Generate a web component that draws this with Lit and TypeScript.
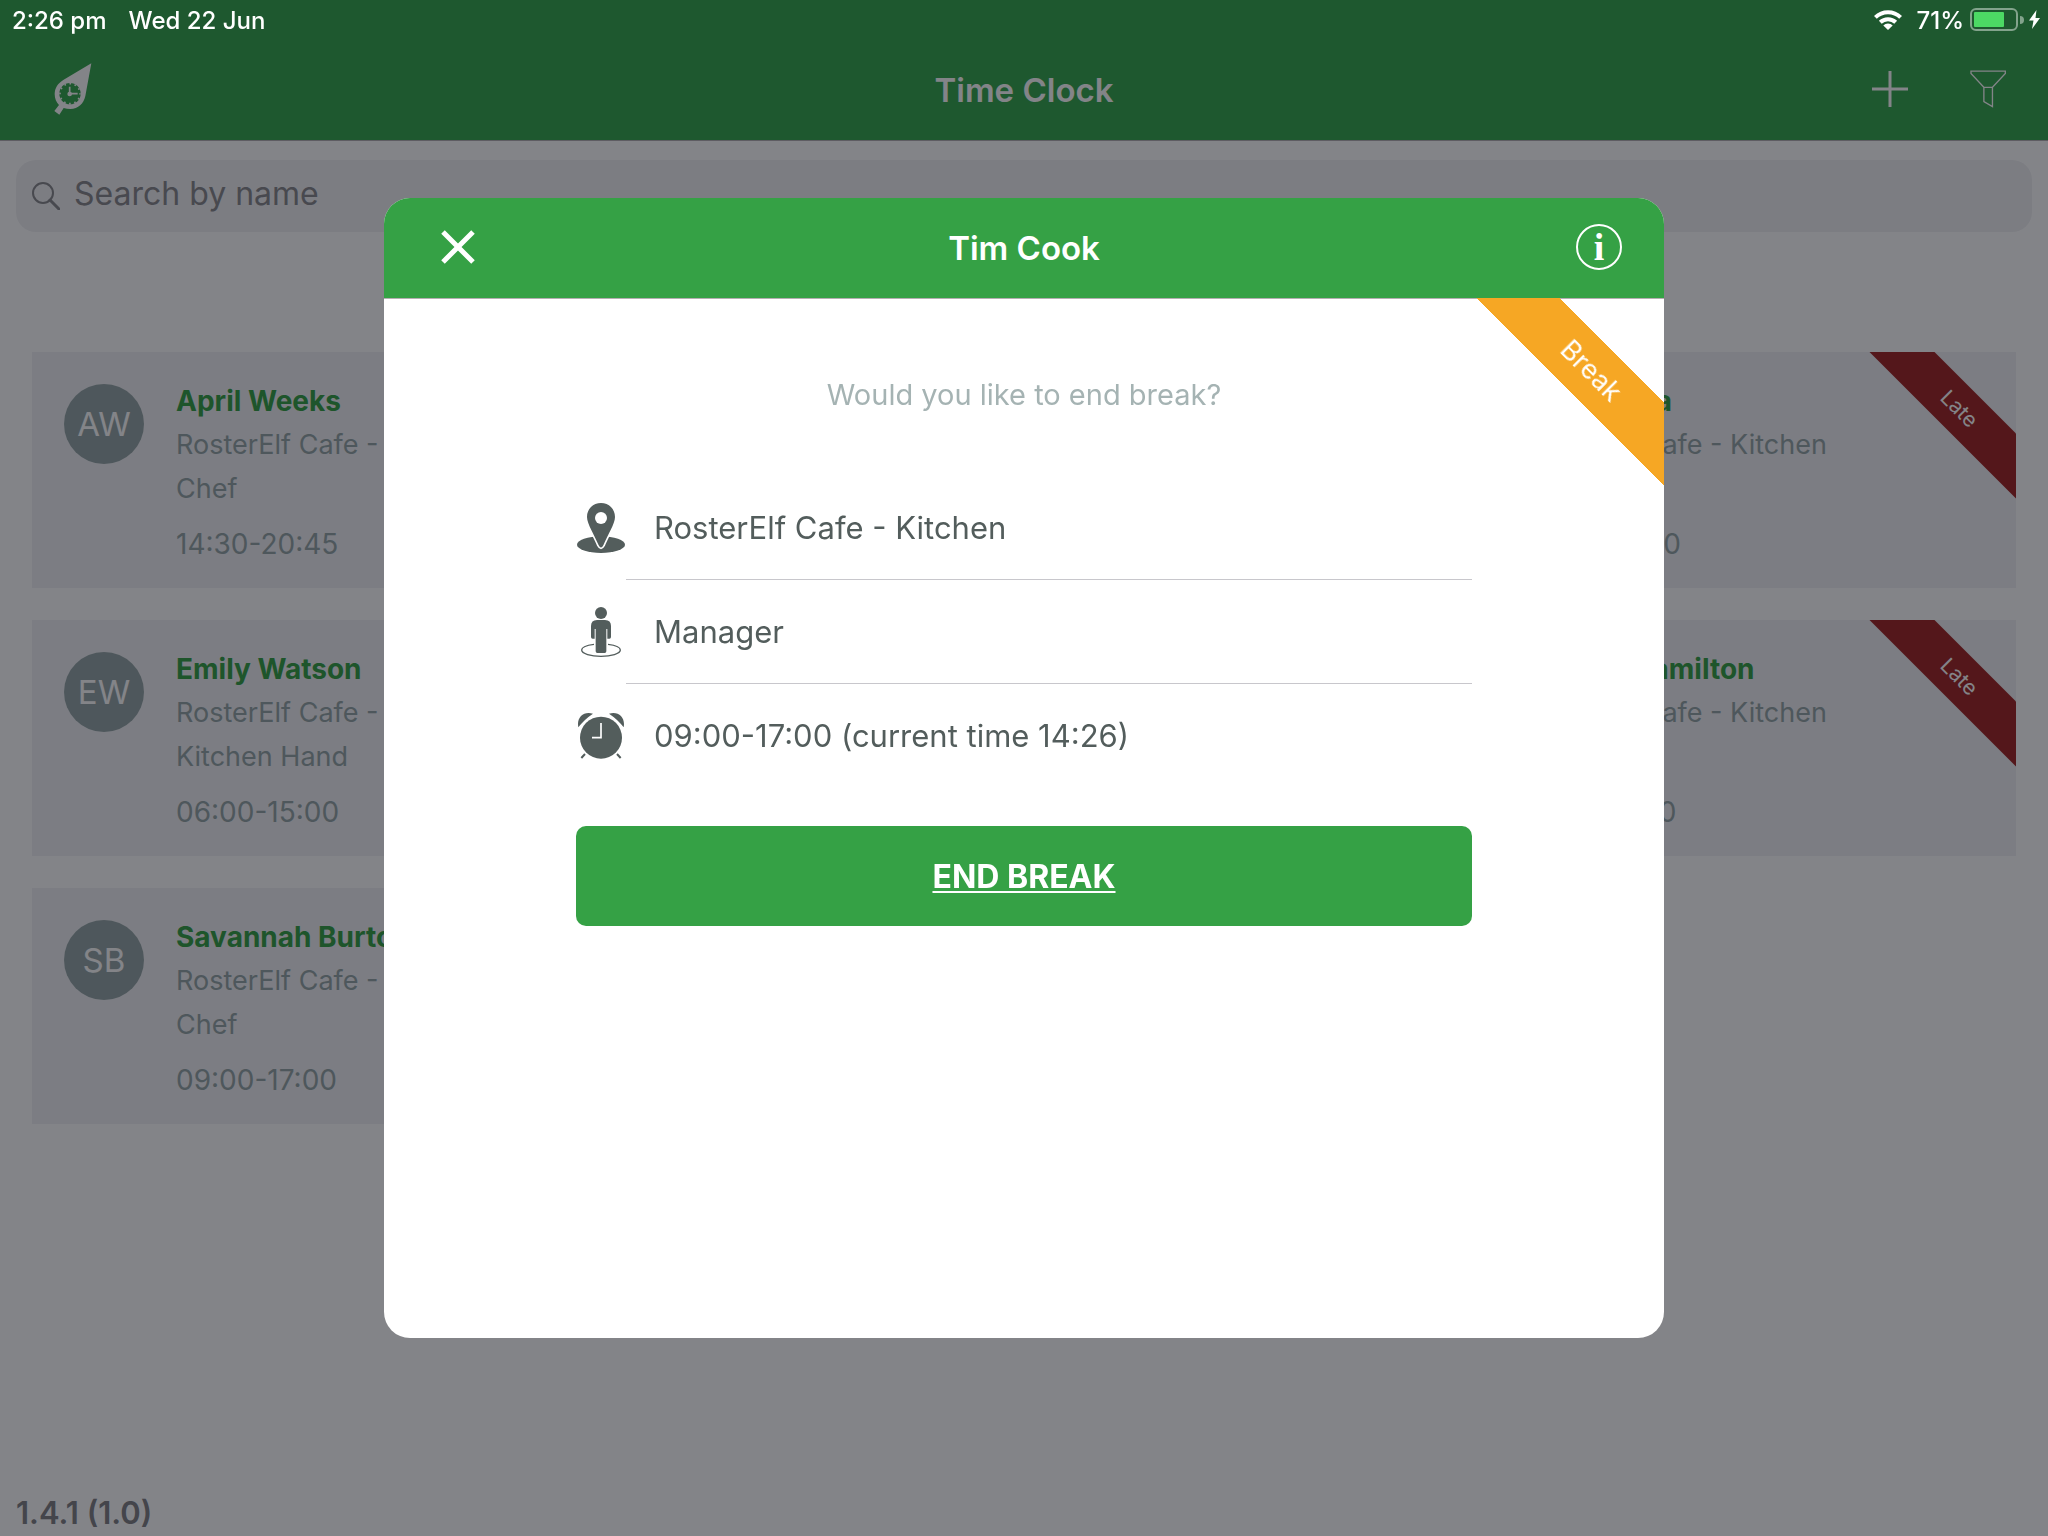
import { LitElement, html, css, svg, nothing } from "lit";
import { customElement, property, state } from "lit/decorators.js";

interface Shift {
  name: string;
  initials: string;
  site: string;
  role: string;
  time: string;
  flag?: "Late";
}

const SITE = "RosterElf Cafe - Kitchen";

const COLUMNS: Shift[][] = [
  [
    { name: "April Weeks", initials: "AW", site: SITE, role: "Chef", time: "14:30-20:45" },
    { name: "Emily Watson", initials: "EW", site: SITE, role: "Kitchen Hand", time: "06:00-15:00" },
    { name: "Savannah Burton", initials: "SB", site: SITE, role: "Chef", time: "09:00-17:00" },
  ],
  [],
  [
    { name: "Julia Costa", initials: "JC", site: SITE, role: "Chef", time: "09:00-17:00", flag: "Late" },
    { name: "Jessica Hamilton", initials: "JH", site: SITE, role: "Chef", time: "14:30-21:00", flag: "Late" },
  ],
];

const logoIcon = svg`
  <svg width="40" height="54" viewBox="160 188 120 162" aria-hidden="true">
    <path fill="currentColor" d="M275 192 L192 241 C174 252 165 266 165 284 C165 298 170 309 178 317 L164 335 L179 346 L192 326 C198 328 205 329 212 329 C236 328 252 314 257 290 Z"/>
    <circle cx="211" cy="283" r="32" fill="#35a64d"/>
    <circle cx="211" cy="283" r="30" fill="none" stroke="currentColor" stroke-width="5" stroke-dasharray="5 10.708" stroke-dashoffset="2.500"/>
    <path d="M210 262v21h24" fill="none" stroke="currentColor" stroke-width="5"/>
    <circle cx="210" cy="284" r="7" fill="currentColor"/>
  </svg>`;

const plusIcon = svg`
  <svg width="36" height="36" viewBox="0 0 36 36" aria-hidden="true">
    <path d="M18 0v36M0 18h36" stroke="currentColor" stroke-width="3"/>
  </svg>`;

const filterIcon = svg`
  <svg width="36" height="38" viewBox="666 210 109 114" aria-hidden="true">
    <path d="M669 213H773V220L734 262V320L708 305V262L669 220ZM708 262H734" fill="none" stroke="currentColor" stroke-width="4"/>
  </svg>`;

const wifiIcon = svg`
  <svg width="28" height="20" viewBox="0 0 28 20" aria-hidden="true">
    <g fill="none" stroke="#fff" stroke-width="4">
      <path d="M1.400 7.400A18 18 0 0 1 26.600 7.400"/>
      <path d="M6.300 12.300A11 11 0 0 1 21.700 12.300"/>
    </g>
    <path d="M14 20L9.300 15.400A6.700 6.700 0 0 1 18.700 15.400Z" fill="#fff"/>
  </svg>`;

const batteryIcon = svg`
  <svg width="70" height="24" viewBox="0 0 70 24" aria-hidden="true">
    <rect x="1" y="1" width="46" height="21" rx="5" fill="none" stroke="#fff" stroke-opacity=".45" stroke-width="2"/>
    <rect x="4" y="4" width="30" height="15" rx="1" fill="#4cd964"/>
    <path d="M50 8a4 4 0 0 1 0 8z" fill="#fff" fill-opacity=".45"/>
    <path d="M66.500 2L59 12.500H63.500L62 21L70 10H65.500Z" fill="#fff"/>
  </svg>`;

const searchIcon = svg`
  <svg width="28" height="28" viewBox="0 0 28 28" aria-hidden="true">
    <g fill="none" stroke="currentColor">
      <circle cx="11" cy="11" r="10" stroke-width="2"/>
      <path d="M18 18L27 27" stroke-width="3" stroke-linecap="round"/>
    </g>
  </svg>`;

const closeIcon = svg`
  <svg width="36" height="34" viewBox="0 0 36 34" aria-hidden="true">
    <path d="M3 2L33 32M33 2L3 32" stroke="currentColor" stroke-width="5"/>
  </svg>`;

const infoIcon = svg`
  <svg width="46" height="46" viewBox="0 0 46 46" aria-hidden="true">
    <circle cx="23" cy="23" r="22" fill="none" stroke="currentColor" stroke-width="2"/>
    <text class="info-glyph" x="23" y="36" text-anchor="middle" fill="currentColor">i</text>
  </svg>`;

const pinIcon = svg`
  <svg width="48" height="50" viewBox="0 0 144 150" aria-hidden="true">
    <ellipse cx="72" cy="125" rx="72" ry="25" fill="currentColor"/>
    <path d="M72 0C48 0 30 18 30 42C30 62 52 96 65 127Q72 140 79 127C92 96 114 62 114 42C114 18 96 0 72 0Z" fill="currentColor" stroke="#fff" stroke-width="10" paint-order="stroke"/>
    <circle cx="72" cy="45" r="18" fill="#fff"/>
  </svg>`;

const personIcon = svg`
  <svg width="48" height="50" viewBox="0 0 144 150" aria-hidden="true">
    <circle cx="72" cy="18" r="18" fill="currentColor"/>
    <path d="M51 112C27 115 14 121 14 129C14 140 42 148 72 148S130 140 130 129C130 121 117 115 93 112" fill="none" stroke="currentColor" stroke-width="4"/>
    <path d="M60 39H84Q102 39 102 57V90Q102 95 97 95H91V66H88V133Q88 138 83 138H61Q56 138 56 133V66H53V95H47Q42 95 42 90V57Q42 39 60 39Z" fill="currentColor"/>
  </svg>`;

const clockIcon = svg`
  <svg width="48" height="48" viewBox="0 0 144 144" aria-hidden="true">
    <circle cx="72" cy="77" r="63" fill="currentColor"/>
    <path d="M4 46C-2 16 20-4 48 5Q22 22 4 46ZM140 46C146 16 124-4 96 5Q122 22 140 46Z" fill="currentColor"/>
    <path d="M24 126L13 138M120 126L131 138" stroke="currentColor" stroke-width="6"/>
    <path d="M72 33V77H45" fill="none" stroke="#fff" stroke-width="5"/>
  </svg>`;

@customElement("shift-card")
export class ShiftCard extends LitElement {
  @property({ attribute: false }) shift!: Shift;

  static styles = css`
    .card {
      position: relative;
      display: flex;
      gap: 32px;
      overflow: hidden;
      padding: 27px 32px 22px;
      background: #f0f1f4;
    }
    .avatar {
      display: flex;
      flex: none;
      align-items: center;
      justify-content: center;
      width: 80px;
      height: 80px;
      margin-top: 5px;
      border-radius: 50%;
      background: #95a5a6;
      color: #fff;
      font-size: 33px;
    }
    .name,
    .line,
    .time {
      margin: 0;
      font-size: 28px;
      font-weight: 400;
      line-height: 44px;
      color: #95a5a6;
      white-space: nowrap;
    }
    .name {
      font-weight: 700;
      color: #35a145;
    }
    .line {
      font-size: 27px;
    }
    .time {
      margin-top: 11px;
    }
    .ribbon {
      position: absolute;
      top: 34px;
      right: -63px;
      width: 240px;
      transform: rotate(45deg);
      background: #a02424;
      color: #fff;
      font-size: 21px;
      line-height: 46px;
      text-align: center;
    }
  `;

  render() {
    const s = this.shift;
    return html`
      <article class="card">
        <span class="avatar">${s.initials}</span>
        <div>
          <h2 class="name">${s.name}</h2>
          <p class="line">${s.site}</p>
          <p class="line">${s.role}</p>
          <p class="time">${s.time}</p>
        </div>
        ${s.flag ? html`<span class="ribbon">${s.flag}</span>` : nothing}
      </article>
    `;
  }
}

@customElement("break-dialog")
export class BreakDialog extends LitElement {
  static styles = css`
    :host {
      display: flex;
    }
    .dialog {
      display: flex;
      flex-direction: column;
      flex: 1;
      overflow: hidden;
      border-radius: 26px;
      background: #fff;
      color: #535d5c;
    }
    .bar {
      display: grid;
      grid-template-columns: 1fr auto 1fr;
      align-items: center;
      height: 100px;
      padding: 0 42px;
      border-bottom: 1px solid #b5aeb2;
      background: #35a145;
      color: #fff;
    }
    .title {
      margin: 0;
      font-size: 33px;
      font-weight: 600;
      line-height: 40px;
    }
    .icon-button {
      display: flex;
      margin-bottom: 2px;
      padding: 0;
      border: 0;
      background: none;
      color: inherit;
    }
    .start {
      justify-self: start;
      padding: 0 14px;
    }
    .end {
      justify-self: end;
    }
    .info-glyph {
      font: 700 38px "Liberation Serif", serif;
    }
    .body {
      position: relative;
      display: flex;
      flex-direction: column;
      flex: 1;
      padding: 76px 15% 60px;
    }
    .corner {
      position: absolute;
      top: -1px;
      right: 0;
      width: 190px;
      height: 190px;
      overflow: hidden;
    }
    .ribbon {
      position: absolute;
      top: 44px;
      right: -77px;
      width: 300px;
      transform: rotate(45deg);
      background: #f6a724;
      color: #fff;
      font-size: 27px;
      line-height: 58px;
      text-align: center;
    }
    .question {
      margin: 0 0 61px;
      font-size: 29px;
      line-height: 40px;
      color: #a5b3b3;
      text-align: center;
    }
    .details {
      margin: 0;
      padding: 0;
      list-style: none;
    }
    .row {
      display: flex;
      height: 104px;
    }
    .symbol {
      display: flex;
      flex: none;
      align-items: center;
      justify-content: center;
      width: 50px;
    }
    .value {
      display: flex;
      flex: 1;
      align-items: center;
      padding-left: 28px;
      border-bottom: 1px solid #c8c7cc;
      font-size: 31px;
    }
    .row:last-child .value {
      border-bottom-color: transparent;
    }
    .action {
      height: 100px;
      margin-top: 38px;
      border: 0;
      border-radius: 10px;
      background: #35a145;
      color: #fff;
      font-family: inherit;
      font-size: 32px;
      font-weight: 700;
      text-decoration: underline 2px;
      text-underline-offset: 3px;
    }
  `;

  render() {
    return html`
      <section class="dialog" role="dialog" aria-modal="true" aria-labelledby="dialog-title">
        <header class="bar">
          <button class="icon-button start" aria-label="Close">${closeIcon}</button>
          <h2 class="title" id="dialog-title">Tim Cook</h2>
          <button class="icon-button end" aria-label="Information">${infoIcon}</button>
        </header>
        <div class="body">
          <div class="corner"><span class="ribbon">Break</span></div>
          <p class="question">Would you like to end break?</p>
          <ul class="details">
            <li class="row"><span class="symbol">${pinIcon}</span><span class="value">${SITE}</span></li>
            <li class="row"><span class="symbol">${personIcon}</span><span class="value">Manager</span></li>
            <li class="row"><span class="symbol">${clockIcon}</span><span class="value">09:00-17:00 (current time 14:26)</span></li>
          </ul>
          <button class="action">END BREAK</button>
        </div>
      </section>
    `;
  }
}

@customElement("app-root")
export class AppRoot extends LitElement {
  @state() private query = "";

  static styles = css`
    :host {
      display: block;
      font-family: Inter, "Liberation Sans", sans-serif;
    }
    .page {
      display: flex;
      flex-direction: column;
      min-height: 100vh;
      background: #fff;
    }
    .top {
      border-bottom: 1px solid #b5aeb2;
      background: #35a64d;
      color: #fff;
    }
    .status {
      position: relative;
      z-index: 2;
      display: flex;
      align-items: center;
      justify-content: space-between;
      height: 40px;
      padding: 0 8px 0 12px;
      font-size: 24px;
      font-weight: 500;
    }
    .group {
      display: flex;
      align-items: center;
      gap: 22px;
    }
    .power {
      display: flex;
      align-items: center;
      gap: 6px;
    }
    .group.right {
      gap: 14px;
    }
    .nav {
      display: grid;
      grid-template-columns: 1fr auto 1fr;
      align-items: center;
      height: 100px;
      padding: 0 42px;
    }
    .title {
      margin: 0;
      font-size: 33px;
      font-weight: 600;
      line-height: 40px;
    }
    .actions {
      display: flex;
      align-items: center;
      justify-content: flex-end;
      gap: 62px;
    }
    .icon-button {
      display: flex;
      margin-bottom: 2px;
      padding: 0;
      border: 0;
      background: none;
      color: inherit;
    }
    .home {
      justify-self: start;
      padding: 0 11px;
    }
    .search {
      display: flex;
      align-items: center;
      gap: 14px;
      height: 72px;
      margin: 19px 16px 120px;
      padding: 0 16px;
      border-radius: 20px;
      background: #f1f1f3;
      color: #88888c;
    }
    .field {
      flex: 1;
      min-width: 0;
      padding: 0 0 4px;
      border: 0;
      outline: 0;
      background: none;
      color: #333;
      font-family: inherit;
      font-size: 32px;
      line-height: 40px;
    }
    .field::placeholder {
      color: #88888c;
      opacity: 1;
    }
    .board {
      display: grid;
      grid-template-columns: repeat(3, minmax(0, 1fr));
      gap: 32px;
      padding: 0 32px;
    }
    .column {
      display: flex;
      flex-direction: column;
      gap: 32px;
    }
    .version {
      margin-top: auto;
      padding: 0 16px 4px;
      color: #808084;
      font-size: 31px;
      font-weight: 600;
      line-height: 38px;
    }
    .overlay {
      position: fixed;
      inset: 0;
      z-index: 1;
      display: grid;
      grid-template-columns: minmax(0, 62.5%);
      justify-content: center;
      padding: 198px 0;
      background: rgba(8, 10, 18, 0.5);
    }
  `;

  render() {
    return html`
      <div class="page">
        <header class="top">
          <div class="status">
            <div class="group"><span>2:26 pm</span><span>Wed 22 Jun</span></div>
            <div class="group right">
              ${wifiIcon}
              <span class="power"><span>71%</span>${batteryIcon}</span>
            </div>
          </div>
          <nav class="nav">
            <button class="icon-button home" aria-label="Home">${logoIcon}</button>
            <h1 class="title">Time Clock</h1>
            <div class="actions">
              <button class="icon-button" aria-label="Add">${plusIcon}</button>
              <button class="icon-button" aria-label="Filter">${filterIcon}</button>
            </div>
          </nav>
        </header>
        <label class="search">
          ${searchIcon}
          <input
            class="field"
            type="text"
            aria-label="Search by name"
            placeholder="Search by name"
            .value=${this.query}
            @input=${(e: Event) => (this.query = (e.target as HTMLInputElement).value)}
          />
        </label>
        <main class="board">
          ${COLUMNS.map(
            (column) => html`
              <div class="column">${column.map((shift) => html`<shift-card .shift=${shift}></shift-card>`)}</div>
            `
          )}
        </main>
        <footer class="version">1.4.1 (1.0)</footer>
      </div>
      <div class="overlay"><break-dialog></break-dialog></div>
    `;
  }
}
